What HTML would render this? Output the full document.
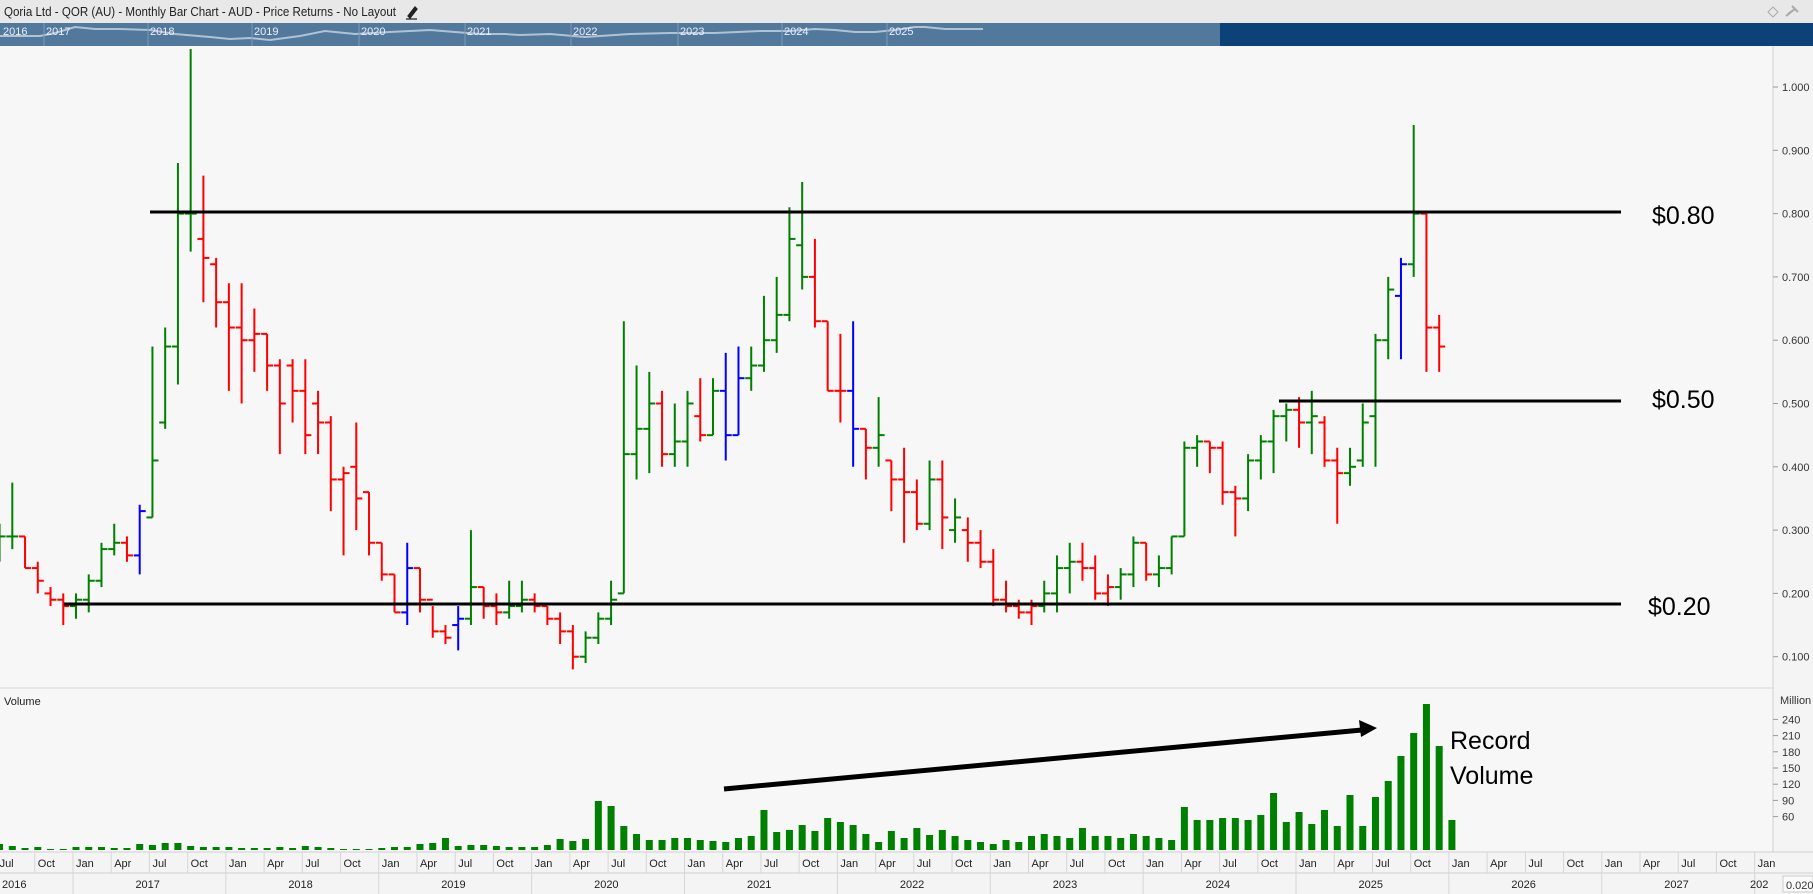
<!DOCTYPE html>
<html><head><meta charset="utf-8"><style>
html,body{margin:0;padding:0;width:1813px;height:894px;overflow:hidden;background:#f7f7f7;font-family:"Liberation Sans",sans-serif}
svg{display:block}
</style></head><body>
<svg id="s" width="1813" height="894" xmlns="http://www.w3.org/2000/svg" font-family="Liberation Sans, sans-serif">
<rect x="0" y="0" width="1813" height="23" fill="#e8e8e8"/>
<text x="4" y="16" font-size="13" fill="#222" textLength="392" lengthAdjust="spacingAndGlyphs">Qoria Ltd - QOR (AU) - Monthly Bar Chart - AUD - Price Returns - No Layout</text>
<path d="M408 16 l7 -9 l2 2 l-7 9 z M406 19 h11" stroke="#222" stroke-width="1.3" fill="#222"/>
<path d="M1768 12 l5 -5 l5 5 l-5 5 z" fill="none" stroke="#aaa"/>
<path d="M1788 14 l7 -5 M1792 6 l6 6 M1786 16 l4 -3" stroke="#aaa" stroke-width="2"/>
<rect x="0" y="23" width="1220" height="23" fill="#52789c"/>
<rect x="1220" y="23" width="593" height="23" fill="#0c4277"/>
<polyline points="0,36 40,36 55,33 75,27 95,29 120,29 150,30 175,34 210,37 230,39 250,38 270,40 300,36 325,31 355,34 390,32 430,30 480,34 505,34 520,35 550,34 585,37 630,34 670,33 715,33 760,31 790,31 815,29 835,30 855,32 875,32 895,30 915,27 925,27 945,29 983,29" fill="none" stroke="#c8d6e4" stroke-width="2" opacity="0.8"/>
<g id="nav"></g>
<line x1="1773" y1="46" x2="1773" y2="894" stroke="#cfcfcf"/>
<rect x="1774" y="46" width="39" height="807" fill="#f4f4f4"/>
<line x1="0" y1="688" x2="1773" y2="688" stroke="#d6d6d6"/>
<text x="4" y="705" font-size="11" fill="#222">Volume</text>
<text x="1780" y="704" font-size="11" fill="#333">Million</text>
<g id="g"></g>
<rect x="0" y="852" width="1813" height="42" fill="#f4f4f4"/>
<line x1="0" y1="852" x2="1813" y2="852" stroke="#cfcfcf"/>
<line x1="0" y1="873" x2="1813" y2="873" stroke="#cfcfcf"/>
<g id="ax"></g>
<rect x="1783" y="876" width="30" height="16" fill="#fafafa" stroke="#ccc"/>
<text x="1786" y="889" font-size="11" fill="#333">0.0201</text>
<g stroke="#000" stroke-width="3">
<line x1="150" y1="212" x2="1621" y2="212"/>
<line x1="1279" y1="401" x2="1621" y2="401"/>
<line x1="64" y1="604" x2="1621" y2="604"/>
<line x1="724" y1="789" x2="1362" y2="730" stroke-width="5"/>
</g>
<path d="M1377 728 l-18 -8 l2 17 z" fill="#000"/>
<g font-size="25" fill="#000">
<text x="1652" y="224">$0.80</text>
<text x="1652" y="408">$0.50</text>
<text x="1648" y="615">$0.20</text>
<text x="1450" y="749">Record</text>
<text x="1450" y="784">Volume</text>
</g>
</svg>
<script>
var NS="http://www.w3.org/2000/svg";
function el(p,t,a,txt){var e=document.createElementNS(NS,t);for(var k in a)e.setAttribute(k,a[k]);if(txt!==undefined)e.textContent=txt;p.appendChild(e);return e;}
var g=document.getElementById('g'),ax=document.getElementById('ax'),nav=document.getElementById('nav');
function X(m){return 76+m*12.74;}
function Y(p){return 87+(1-p)*633;}
for(var i=1;i<=10;i++){var p=i/10,y=Y(p);el(g,'line',{x1:1773,y1:y,x2:1778,y2:y,stroke:'#999'});el(g,'text',{x:1782,y:y+4,'font-size':11,fill:'#333'},p.toFixed(3));}
[240,210,180,150,120,90,60].forEach(function(v){var y=849-v*0.54;el(g,'line',{x1:1773,y1:y,x2:1778,y2:y,stroke:'#999'});el(g,'text',{x:1782,y:y+4,'font-size':11,fill:'#333'},v);});
var D=[
[.27,.31,.25,.29],[.29,.375,.27,.29],[.29,.29,.24,.24],[.24,.25,.20,.22],[.20,.21,.18,.19],[.19,.20,.15,.18],
[.18,.20,.16,.19],[.19,.23,.17,.22],[.22,.28,.21,.27],[.27,.31,.26,.28],[.28,.29,.25,.26],[.26,.34,.23,.33,'b'],[.32,.59,.32,.41],[.47,.62,.46,.59],[.59,.88,.53,.80],[.80,1.06,.74,.80],[.76,.86,.66,.73],[.72,.73,.62,.66],
[.66,.69,.52,.62],[.62,.69,.50,.60],[.60,.65,.55,.61,'r'],[.61,.61,.52,.56],[.56,.57,.42,.50],[.56,.57,.47,.52],[.52,.57,.42,.45],[.50,.52,.42,.47],[.47,.48,.33,.38],[.38,.40,.26,.39,'r'],[.40,.47,.30,.35],[.36,.36,.26,.28],
[.28,.28,.22,.23],[.23,.23,.17,.17],[.17,.28,.15,.24,'b'],[.24,.24,.17,.19],[.19,.18,.13,.14],[.14,.15,.12,.13],[.15,.18,.11,.16,'b'],[.16,.30,.15,.21],[.21,.21,.16,.18],[.18,.20,.15,.17],[.17,.22,.16,.18],[.18,.22,.17,.19],
[.19,.20,.17,.18],[.18,.18,.15,.16],[.16,.17,.12,.14],[.14,.15,.08,.10],[.10,.14,.09,.13],[.13,.17,.12,.16],[.16,.22,.15,.19],[.20,.63,.20,.42],[.42,.56,.38,.46],[.46,.55,.39,.50],[.50,.52,.40,.42],[.42,.50,.40,.44],
[.44,.52,.40,.50],[.48,.54,.44,.45],[.45,.54,.45,.52],[.52,.58,.41,.45,'b'],[.45,.59,.45,.54,'b'],[.54,.59,.52,.56],[.56,.67,.55,.60],[.60,.70,.58,.64],[.64,.81,.63,.76],[.75,.85,.68,.70,'g'],[.70,.76,.62,.63],[.63,.63,.52,.52],
[.52,.61,.47,.52,'r'],[.52,.63,.40,.46,'b'],[.46,.46,.38,.43],[.43,.51,.40,.45],[.41,.41,.33,.38],[.38,.43,.28,.36],[.36,.38,.30,.31],[.31,.41,.30,.38],[.38,.41,.27,.32],[.30,.35,.28,.32],[.30,.32,.25,.28],[.28,.30,.24,.25],
[.25,.27,.18,.19],[.19,.22,.17,.18],[.18,.19,.16,.17],[.17,.19,.15,.18,'r'],[.18,.22,.17,.20],[.20,.26,.17,.24],[.24,.28,.20,.25],[.25,.28,.22,.24],[.24,.26,.19,.20],[.20,.23,.18,.21,'r'],[.21,.24,.19,.23],[.23,.29,.21,.28],
[.28,.28,.22,.23],[.23,.26,.21,.24],[.24,.29,.23,.29],[.29,.44,.29,.43],[.43,.45,.40,.44],[.44,.44,.39,.43],[.43,.44,.34,.36],[.36,.37,.29,.35],[.35,.42,.33,.41],[.41,.45,.38,.44],[.44,.49,.39,.48],[.48,.50,.44,.49],
[.49,.51,.43,.47],[.47,.52,.42,.48],[.47,.48,.40,.41],[.41,.43,.31,.39],[.39,.43,.37,.40],[.41,.50,.40,.47],[.48,.61,.40,.60],[.60,.70,.57,.68],[.67,.73,.57,.72,'b'],[.72,.94,.70,.80],[.80,.80,.55,.62],[.62,.64,.55,.59]];
var V=[6,4,2,3,1,1, 3,3,3,2,2,6,5,7,7,4,3,3, 3,2,2,2,3,2,4,3,2,1,1,1, 2,3,3,6,7,12,4,5,5,4,3,3, 3,5,11,9,11,49,44,24,16,10,10,12,
12,10,9,8,12,14,40,18,20,25,19,32, 28,25,16,8,19,12,22,15,20,14,10,8, 6,10,8,14,16,14,12,22,14,14,12,16, 14,12,10,43,30,30,32,32,30,35,57,28,
38,26,40,24,55,24,53,69,94,117,146,104,30];
D.forEach(function(d,i){var m=i-6,x=X(m);var c=d[4]||(d[3]>=d[0]?'g':'r');var col={g:'#008000',r:'#ff0000',b:'#0000ff'}[c];
el(g,'line',{x1:x,y1:Y(d[1]),x2:x,y2:Y(d[2]),stroke:col,'stroke-width':2});
el(g,'line',{x1:x-6,y1:Y(d[0]),x2:x,y2:Y(d[0]),stroke:col,'stroke-width':2});
el(g,'line',{x1:x,y1:Y(d[3]),x2:x+6,y2:Y(d[3]),stroke:col,'stroke-width':2});});
V.forEach(function(v,i){var x=X(i-6);el(g,'rect',{x:x-3.5,y:850-v,width:7,height:v,fill:'#008000'});});
var mn=['Jan','Apr','Jul','Oct'];
for(var m=-6;m<=132;m+=3){var x=X(m)-3;el(ax,'line',{x1:x,y1:852,x2:x,y2:873,stroke:'#d6d6d6'});var lab=mn[((m%12)+12)%12/3];el(ax,'text',{x:x+3,y:867,'font-size':11,fill:'#222'},lab);}
for(var yr=2016;yr<=2028;yr++){var m0=(yr-2017)*12;var x=X(m0)-3;el(ax,'line',{x1:x,y1:873,x2:x,y2:894,stroke:'#d6d6d6'});var cx=yr==2016?2:X(m0+6)-3-14;if(yr==2028)cx=1750;el(ax,'text',{x:cx,y:888,'font-size':11,fill:'#222'},yr==2028?'202':String(yr));}
var ny=[[3,'2016'],[46,'2017'],[150,'2018'],[254,'2019'],[361,'2020'],[467,'2021'],[573,'2022'],[680,'2023'],[784,'2024'],[889,'2025']];
ny.forEach(function(a){if(a[0]>3)el(nav,'line',{x1:a[0]-2,y1:23,x2:a[0]-2,y2:46,stroke:'#7d9bb8'});el(nav,'text',{x:a[0],y:35,'font-size':11,fill:'#eef'},a[1]);});
</script>
</body></html>
